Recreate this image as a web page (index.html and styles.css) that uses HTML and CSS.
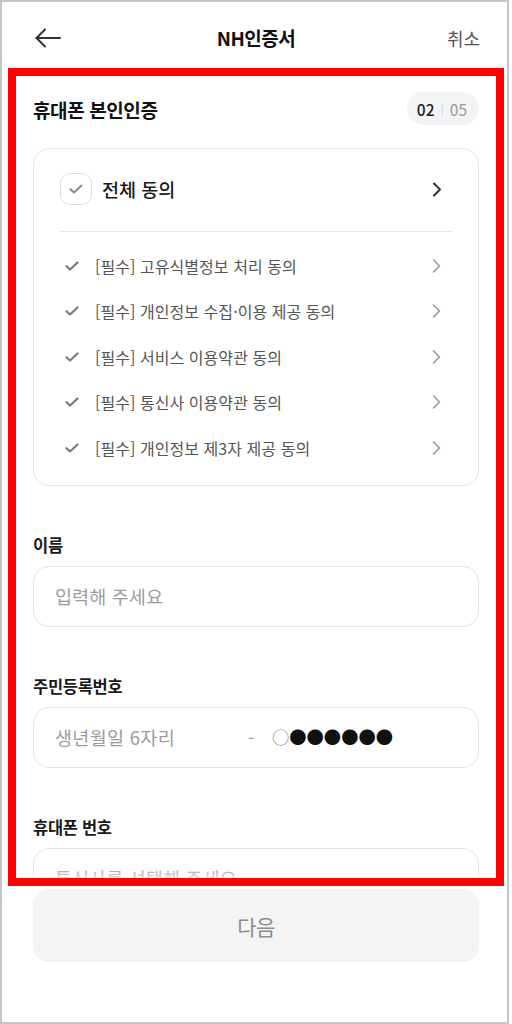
FILE: index.html
```html
<!DOCTYPE html>
<html lang="ko">
<head>
<meta charset="utf-8">
<title>NH인증서</title>
<link rel="stylesheet" href="styles.css">
</head>
<body>
<div class="frame">
  <header class="topbar">
    <span class="back">
      <svg width="26" height="20" viewBox="0 0 26 20" fill="none" stroke="#333" stroke-width="2" stroke-linecap="round" stroke-linejoin="round"><path d="M1.5 10H25"/><path d="M10 1.5L1.5 10L10 18.5"/></svg>
    </span>
    <h1 class="title">NH인증서</h1>
    <span class="cancel">취소</span>
  </header>

  <main class="scroll">
    <div class="heading-row">
      <h2 class="heading">휴대폰 본인인증</h2>
      <div class="step"><b>02</b><i>|</i><span>05</span></div>
    </div>

    <section class="agree">
      <div class="agree-all">
        <span class="checkbox">
          <svg width="14" height="10" viewBox="0 0 14 10" fill="none" stroke="#8a8a8a" stroke-width="2" stroke-linecap="round" stroke-linejoin="round"><path d="M1.5 5.2L5 8.5L12.5 1.5"/></svg>
        </span>
        <span class="agree-all-text">전체 동의</span>
        <svg class="chev-dark" width="10" height="15" viewBox="0 0 10 15" fill="none" stroke="#333" stroke-width="2" stroke-linecap="round" stroke-linejoin="round"><path d="M2 1.5L8 7.5L2 13.5"/></svg>
      </div>
      <ul class="agree-list">
        <li><svg class="tick" width="14" height="10" viewBox="0 0 14 10" fill="none" stroke="#7a7a7a" stroke-width="2.2" stroke-linecap="round" stroke-linejoin="round"><path d="M1.5 5.2L5 8.5L12.5 1.5"/></svg><span class="item-text">[필수] 고유식별정보 처리 동의</span><svg class="chev" width="9" height="14" viewBox="0 0 9 14" fill="none" stroke="#9a9a9a" stroke-width="1.6" stroke-linecap="round" stroke-linejoin="round"><path d="M1.5 1L7.5 7L1.5 13"/></svg></li>
        <li><svg class="tick" width="14" height="10" viewBox="0 0 14 10" fill="none" stroke="#7a7a7a" stroke-width="2.2" stroke-linecap="round" stroke-linejoin="round"><path d="M1.5 5.2L5 8.5L12.5 1.5"/></svg><span class="item-text">[필수] 개인정보 수집·이용 제공 동의</span><svg class="chev" width="9" height="14" viewBox="0 0 9 14" fill="none" stroke="#9a9a9a" stroke-width="1.6" stroke-linecap="round" stroke-linejoin="round"><path d="M1.5 1L7.5 7L1.5 13"/></svg></li>
        <li><svg class="tick" width="14" height="10" viewBox="0 0 14 10" fill="none" stroke="#7a7a7a" stroke-width="2.2" stroke-linecap="round" stroke-linejoin="round"><path d="M1.5 5.2L5 8.5L12.5 1.5"/></svg><span class="item-text">[필수] 서비스 이용약관 동의</span><svg class="chev" width="9" height="14" viewBox="0 0 9 14" fill="none" stroke="#9a9a9a" stroke-width="1.6" stroke-linecap="round" stroke-linejoin="round"><path d="M1.5 1L7.5 7L1.5 13"/></svg></li>
        <li><svg class="tick" width="14" height="10" viewBox="0 0 14 10" fill="none" stroke="#7a7a7a" stroke-width="2.2" stroke-linecap="round" stroke-linejoin="round"><path d="M1.5 5.2L5 8.5L12.5 1.5"/></svg><span class="item-text">[필수] 통신사 이용약관 동의</span><svg class="chev" width="9" height="14" viewBox="0 0 9 14" fill="none" stroke="#9a9a9a" stroke-width="1.6" stroke-linecap="round" stroke-linejoin="round"><path d="M1.5 1L7.5 7L1.5 13"/></svg></li>
        <li><svg class="tick" width="14" height="10" viewBox="0 0 14 10" fill="none" stroke="#7a7a7a" stroke-width="2.2" stroke-linecap="round" stroke-linejoin="round"><path d="M1.5 5.2L5 8.5L12.5 1.5"/></svg><span class="item-text">[필수] 개인정보 제3자 제공 동의</span><svg class="chev" width="9" height="14" viewBox="0 0 9 14" fill="none" stroke="#9a9a9a" stroke-width="1.6" stroke-linecap="round" stroke-linejoin="round"><path d="M1.5 1L7.5 7L1.5 13"/></svg></li>
      </ul>
    </section>

    <div class="field">
      <label class="label">이름</label>
      <div class="input"><span class="ph">입력해 주세요</span></div>
    </div>

    <div class="field">
      <label class="label">주민등록번호</label>
      <div class="input">
        <span class="ph ph-birth">생년월일 6자리</span>
        <span class="dash">-</span>
        <span class="masked"><span class="open">○</span>●●●●●●</span>
      </div>
    </div>

    <div class="field">
      <label class="label">휴대폰 번호</label>
      <div class="input"><span class="ph">통신사를 선택해 주세요</span></div>
    </div>
  </main>

  <footer class="footer">
    <button class="next">다음</button>
  </footer>

  <div class="annot"></div>
</div>
</body>
</html>
```

FILE: styles.css
```css
* { box-sizing: border-box; }

html, body {
  margin: 0;
  padding: 0;
  background: #fff;
}

body {
  font-family: "Noto Sans CJK KR", "Noto Sans", sans-serif;
  color: #222;
}

.frame {
  position: relative;
  width: 509px;
  height: 1024px;
  border: 2px solid #c6c6c6;
  padding: 0 28px 0 31px;
  background: #fff;
  overflow: hidden;
}

/* header */
.topbar {
  height: 72px;
  display: grid;
  grid-template-columns: 1fr auto 1fr;
  align-items: center;
}

.back {
  display: flex;
  align-items: center;
  margin-left: 2px;
}

.title {
  margin: 0;
  font-size: 19px;
  font-weight: 700;
  letter-spacing: -0.5px;
  color: #111;
  line-height: 24px;
}

.cancel {
  justify-self: end;
  margin-right: -1px;
  font-size: 18px;
  letter-spacing: 0;
  color: #555;
  line-height: 24px;
}

/* scroll area */
.scroll {
  position: relative;
  height: 810px;
  overflow: hidden;
}

.scroll::after {
  content: "";
  position: absolute;
  left: 0;
  right: 0;
  bottom: 0;
  height: 16px;
  background: linear-gradient(rgba(255,255,255,0), #fff);
}

.heading-row {
  padding-top: 18px;
  display: flex;
  align-items: center;
  justify-content: space-between;
}

.heading {
  margin: 2px 0 0;
  font-size: 19px;
  font-weight: 700;
  letter-spacing: -0.4px;
  color: #111;
  line-height: 26px;
}

.step {
  height: 33px;
  padding: 0 12px 0 10px;
  border-radius: 17px;
  background: #f2f4f6;
  display: flex;
  align-items: center;
  gap: 6px;
  font-size: 15.5px;
  line-height: 20px;
}

.step b {
  font-weight: 500;
  color: #222;
}

.step i {
  font-style: normal;
  color: #d4d4d4;
  font-size: 12px;
}

.step span {
  color: #9a9a9a;
}

/* agreement box */
.agree {
  margin-top: 23px;
  border: 1px solid #e4e4e4;
  border-radius: 16px;
  padding: 24px 26px 14px;
}

.agree-all {
  height: 32px;
  display: flex;
  align-items: center;
  padding-bottom: 26px;
  box-sizing: content-box;
  border-bottom: 1px solid #ebebeb;
}

.checkbox {
  width: 32px;
  height: 32px;
  border: 1.5px solid #dcdcdc;
  border-radius: 10px;
  display: flex;
  align-items: center;
  justify-content: center;
}

.agree-all-text {
  margin-left: 10px;
  font-size: 18.5px;
  font-weight: 500;
  letter-spacing: 0;
  color: #1a1a1a;
  line-height: 24px;
  flex: 1;
}

.chev-dark {
  margin-right: 10px;
}

.agree-list {
  list-style: none;
  margin: 0;
  padding: 11px 0 0;
}

.agree-list li {
  height: 45.5px;
  display: flex;
  align-items: center;
  padding-left: 5px;
}

.tick {
  flex: none;
}

.item-text {
  margin-left: 16px;
  flex: 1;
  font-size: 16px;
  letter-spacing: 0.05px;
  color: #555;
  line-height: 22px;
}

.chev {
  margin-right: 11px;
}

/* fields */
.field {
  margin-top: 48px;
}

.label {
  display: block;
  height: 22px;
  font-size: 16.5px;
  font-weight: 700;
  letter-spacing: -0.3px;
  color: #1a1a1a;
  line-height: 22px;
}

.input {
  margin-top: 10px;
  height: 61px;
  border: 1px solid #e4e4e4;
  border-radius: 16px;
  padding: 0 21px;
  display: flex;
  align-items: center;
}

.ph {
  font-size: 18.5px;
  letter-spacing: 0.1px;
  color: #9c9c9c;
  line-height: 24px;
}

.ph-birth {
  width: 193px;
  font-size: 18.5px;
  letter-spacing: 0.3px;
}

.dash {
  font-size: 18px;
  color: #9c9c9c;
  line-height: 24px;
  width: 24px;
}

.masked {
  font-size: 17.3px;
  color: #111;
  line-height: 24px;
  letter-spacing: 0;
}

.open {
  color: #8a8a8a;
}

/* footer */
.footer {
  padding-top: 5px;
}

.next {
  display: block;
  width: 100%;
  height: 73px;
  border: 0;
  border-radius: 16px;
  background: #f4f4f4;
  font-family: "Noto Sans CJK KR", "Noto Sans", sans-serif;
  font-size: 21px;
  letter-spacing: -0.5px;
  color: #8c8c8c;
}

/* red annotation rectangle overlaying the screenshot */
.annot {
  position: absolute;
  left: 6px;
  top: 66px;
  width: 496px;
  height: 818px;
  border: 8px solid #ff0000;
  pointer-events: none;
}
```
